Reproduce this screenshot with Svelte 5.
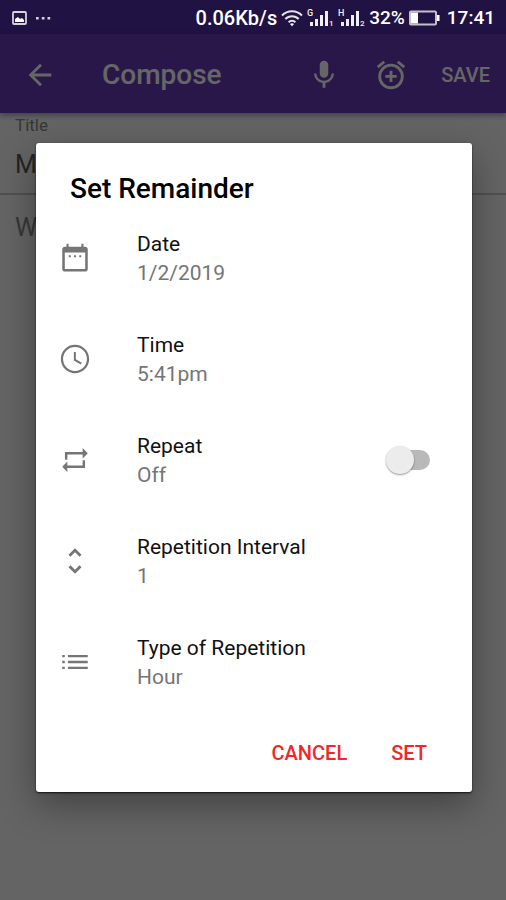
<script lang="ts">
  interface Row {
    id: string;
    label: string;
    value: string;
  }

  let title = $state('M');
  let note = $state('');
  let repeat = $state(false);
  let open = $state(true);

  let rows: Row[] = $derived([
    { id: 'date', label: 'Date', value: '1/2/2019' },
    { id: 'time', label: 'Time', value: '5:41pm' },
    { id: 'repeat', label: 'Repeat', value: repeat ? 'On' : 'Off' },
    { id: 'interval', label: 'Repetition Interval', value: '1' },
    { id: 'type', label: 'Type of Repetition', value: 'Hour' }
  ]);

  const icons: Record<string, string> = {
    date: 'M9 10H7.6v1.5H9zm3.7 0h-1.4v1.5h1.4zm3.7 0H15v1.5h1.4zM19 4h-1V2h-1.5v2h-9V2H6v2H5a2 2 0 0 0-2 2v13.5a2 2 0 0 0 2 2h14a2 2 0 0 0 2-2V6a2 2 0 0 0-2-2zm.2 15.7H4.8V8.2h14.4z',
    time: 'M11.99 2C6.47 2 2 6.48 2 12s4.47 10 9.99 10C17.52 22 22 17.52 22 12S17.52 2 11.99 2zM12 20.4a8.4 8.4 0 1 1 0-16.8 8.4 8.4 0 0 1 0 16.8zM12.6 7h-1.4v6l4.9 2.9.7-1.2-4.2-2.5z',
    repeat: 'M4.9 6.4h12.5V3.6L21 7.3l-3.6 3.7V8.1H6.6v3.7H4.9zM19.1 17.6H6.6v2.8L3 16.7 6.6 13v2.9h10.8v-3.7h1.7z',
    interval: 'M12 5.8l3.2 3.2 1.4-1.4L12 3 7.4 7.6 8.8 9zM12 18.2L8.8 15l-1.4 1.4L12 21l4.6-4.6-1.4-1.4z',
    type: 'M3 12.8h1.8v-1.6H3zm0 4.2h1.8v-1.6H3zM3 8.6h1.8V7H3zm4 4.2h14v-1.6H7zM7 17h14v-1.6H7zM7 7v1.6h14V7z'
  };
</script>

{#snippet rowBody(row: Row)}
  <svg class="row-icon" viewBox="0 0 24 24" aria-hidden="true">
    <path d={icons[row.id]} fill-rule="evenodd"></path>
  </svg>
  <span class="row-text">
    <span class="row-label">{row.label}</span>
    <span class="row-value">{row.value}</span>
  </span>
{/snippet}

<div class="screen">
  <header class="status-bar">
    <div class="status-group">
      <svg width="15" height="14" viewBox="0 0 15 14" aria-hidden="true">
        <rect x="1" y="1" width="13" height="12" rx="1" fill="none" stroke="#d5d2dc" stroke-width="1.8"></rect>
        <path d="M3 11V8l3-2 2 2 2-1 2 2v2z" fill="#fff"></path>
      </svg>
      <svg width="16" height="14" viewBox="0 0 16 14" aria-hidden="true">
        <path d="M1 6h2.7v2.4H1zm5.8 0h2.7v2.4H6.8zm5.7 0h2.7v2.4h-2.7z" fill="#d5d2dc"></path>
      </svg>
    </div>
    <div class="status-group right">
      <span class="speed">0.06Kb/s</span>
      <svg width="22" height="18" viewBox="0 0 22 18" aria-hidden="true">
        <g fill="none" stroke="#e4e2e8" stroke-width="2">
          <path d="M1 6.5a14 14 0 0 1 20 0"></path>
          <path d="M4.3 10a9.4 9.4 0 0 1 13.4 0"></path>
          <path d="M7.6 13.2a4.8 4.8 0 0 1 6.8 0"></path>
        </g>
        <path d="M11 17.3l-2-2.2a3 3 0 0 1 4 0z" fill="#fff"></path>
      </svg>
      {#each ['G', 'H'] as network, i}
        <svg class="signal" width="27" height="18" viewBox="0 0 27 18" aria-hidden="true">
          <text x="0" y="7" font-size="9">{network}</text>
          <path d="M3 13h3v4H3zm5-3h3v7H8zm5-4h3v11h-3zm5-4h3v15h-3z"></path>
          <text x="22" y="17" font-size="8">{i + 1}</text>
        </svg>
      {/each}
      <span>32%</span>
      <svg width="31" height="16" viewBox="0 0 31 16" aria-hidden="true">
        <rect x="1" y="1.5" width="26" height="13" rx="1" fill="none" stroke="#c4c1cb" stroke-width="2"></rect>
        <path d="M2 2.5h7v11H2zM28 5h2.5v6H28z" fill="#fff"></path>
      </svg>
      <span class="clock">17:41</span>
    </div>
  </header>

  <div class="body">
    <div class="app-bar">
      <button type="button" class="bar-button" aria-label="Back">
        <svg width="34" height="34" viewBox="0 0 24 24">
          <path d="M20 11H7.83l5.59-5.59L12 4l-8 8 8 8 1.41-1.41L7.83 13H20z"></path>
        </svg>
      </button>
      <h1>Compose</h1>
      <button type="button" class="bar-button" aria-label="Voice">
        <svg width="34" height="34" viewBox="0 0 24 24">
          <path d="M12 14c1.66 0 3-1.34 3-3V5a3 3 0 0 0-6 0v6c0 1.66 1.34 3 3 3zm5.3-3c0 3-2.54 5.1-5.3 5.1S6.7 14 6.7 11H5c0 3.41 2.72 6.23 6 6.72V21h2v-3.28c3.28-.48 6-3.3 6-6.72z"></path>
        </svg>
      </button>
      <button type="button" class="bar-button" aria-label="Add alarm">
        <svg width="34" height="34" viewBox="0 0 24 24">
          <path d="M7.88 3.39L6.6 1.86 2 5.71l1.29 1.53zM22 5.72l-4.6-3.86-1.29 1.53 4.6 3.86zM12 4a9 9 0 1 0 0 18 9 9 0 0 0 0-18zm0 16a7 7 0 1 1 0-14 7 7 0 0 1 0 14zm1-11h-2v3H8v2h3v3h2v-3h3v-2h-3z"></path>
        </svg>
      </button>
      <button type="button" class="save">SAVE</button>
    </div>

    <form class="compose">
      <label for="note-title">Title</label>
      <input id="note-title" type="text" bind:value={title} />
      <textarea aria-label="Note" placeholder="W" bind:value={note}></textarea>
    </form>

    {#if open}
      <div class="scrim">
        <div class="dialog" role="dialog" aria-modal="true" aria-labelledby="dialog-title">
          <h2 id="dialog-title">Set Remainder</h2>
          {#each rows as row (row.id)}
            {#if row.id === 'repeat'}
              <label class="row">
                {@render rowBody(row)}
                <input type="checkbox" role="switch" class="switch" bind:checked={repeat} />
              </label>
            {:else}
              <button type="button" class="row">
                {@render rowBody(row)}
              </button>
            {/if}
          {/each}
          <div class="actions">
            <button type="button" onclick={() => (open = false)}>CANCEL</button>
            <button type="button" onclick={() => (open = false)}>SET</button>
          </div>
        </div>
      </div>
    {/if}
  </div>
</div>

<style>
  :global(body) {
    background: #646464;
  }

  .screen {
    display: flex;
    flex-direction: column;
    min-height: 100vh;
    font-family: Roboto, 'Liberation Sans', sans-serif;
  }

  button,
  input,
  textarea {
    margin: 0;
    padding: 0;
    border: none;
    background: none;
    font-family: inherit;
  }

  button {
    cursor: pointer;
  }

  .status-bar {
    display: flex;
    align-items: center;
    justify-content: space-between;
    height: 34px;
    padding: 2px 11px 0 12px;
    box-sizing: border-box;
    background: #201243;
    color: #fff;
    font-size: 19px;
    font-weight: 500;
    line-height: 24px;
  }

  .status-group {
    display: flex;
    align-items: center;
    gap: 8px;
  }

  .status-group.right {
    gap: 4px;
  }

  .speed {
    font-size: 20px;
  }

  .signal {
    fill: #f0eff3;
  }

  .clock {
    padding-left: 3px;
  }

  .body {
    position: relative;
    flex: 1;
    display: flex;
    flex-direction: column;
    background: #fafafa;
  }

  .app-bar {
    display: flex;
    align-items: center;
    height: 79px;
    padding: 2px 16px 0 23px;
    box-sizing: border-box;
    background: #673ab7;
    box-shadow: 0 2px 6px rgba(0, 0, 0, 0.4);
    color: #fff;
  }

  .bar-button {
    display: flex;
    color: inherit;
  }

  .bar-button + .bar-button {
    margin-left: 33px;
  }

  .bar-button svg {
    fill: currentColor;
  }

  h1 {
    flex: 1;
    margin: 0;
    padding-left: 45px;
    font-size: 28px;
    font-weight: 500;
    line-height: 36px;
  }

  .save {
    margin-left: 33px;
    color: inherit;
    font-size: 20px;
    font-weight: 500;
    line-height: 28px;
  }

  .compose {
    flex: 1;
    display: flex;
    flex-direction: column;
  }

  .compose label {
    padding: 1px 15px 0;
    color: #8a8a8a;
    font-size: 17px;
    line-height: 22px;
  }

  .compose input,
  .compose textarea {
    padding: 0 15px;
    font-size: 25px;
    outline: none;
  }

  .compose input {
    height: 57px;
    border-bottom: 2px solid #c8c8c8;
    color: #5a5a5a;
  }

  .compose textarea {
    flex: 1;
    padding-top: 17px;
    line-height: 32px;
    resize: none;
  }

  .compose textarea::placeholder {
    color: #8a8a8a;
    opacity: 1;
  }

  .scrim {
    position: absolute;
    inset: 0;
    display: flex;
    align-items: center;
    justify-content: center;
    padding: 0 34px 0 36px;
    background: rgba(0, 0, 0, 0.6);
  }

  .dialog {
    flex: 1;
    max-width: 560px;
    border-radius: 3px;
    background: #fff;
    box-shadow:
      0 1px 2px rgba(0, 0, 0, 0.8),
      0 12px 36px rgba(0, 0, 0, 0.36);
  }

  h2 {
    margin: 0;
    padding: 30px 34px 3px;
    color: #000;
    font-size: 28px;
    font-weight: 500;
    line-height: 32px;
  }

  .row {
    display: flex;
    align-items: center;
    width: 100%;
    box-sizing: border-box;
    padding: 22px 42px 22px 22px;
    text-align: left;
    cursor: pointer;
  }

  .row-icon {
    width: 34px;
    height: 34px;
    fill: #757575;
  }

  .row-text {
    flex: 1;
    display: flex;
    flex-direction: column;
    gap: 1px;
    padding-left: 45px;
    font-size: 21px;
    line-height: 28px;
  }

  .row-label {
    color: #111;
  }

  .row-value {
    color: #757575;
  }

  .switch {
    appearance: none;
    display: flex;
    align-items: center;
    width: 36px;
    height: 20px;
    border-radius: 10px;
    background: #b9b9b9;
    cursor: pointer;
  }

  .switch::before {
    content: '';
    width: 28px;
    height: 28px;
    flex: none;
    margin-left: -8px;
    border-radius: 50%;
    background: #ececec;
    box-shadow: 0 1px 2px rgba(0, 0, 0, 0.4);
  }

  .switch:checked::before {
    margin-left: 16px;
  }

  .actions {
    display: flex;
    justify-content: flex-end;
    padding: 15px 34px 14px;
  }

  .actions button {
    height: 50px;
    padding: 0 11px;
    color: #f52525;
    font-size: 20px;
    font-weight: 500;
  }

  .actions button + button {
    margin-left: 22px;
  }
</style>
